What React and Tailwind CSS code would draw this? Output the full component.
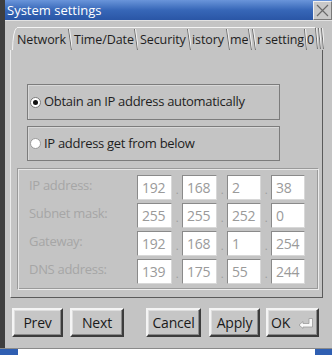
import React from 'react';

// Separador inclinado entre pestañas
function Sep({ w = 4 }) {
  return (
    <svg width={w} height="23" className="shrink-0">
      <line x1="0.5" y1="1" x2={w - 0.5} y2="22" stroke="#6e6e6e" strokeWidth="1" />
      <line x1="1.5" y1="1" x2={w + 0.5} y2="22" stroke="#f2f2f2" strokeWidth="1" />
    </svg>
  );
}

const tabs = [
  { label: 'Network', w: 'w-[51px]', pl: 'pl-0' },
  { label: 'Time/Date', w: 'w-[62px]', pl: 'pl-[2px]' },
  { label: 'Security', w: 'w-[49px]', pl: 'pl-[2px]' },
  { label: 'istory', w: 'w-[35px]', pl: 'pl-[1px]' },
  { label: 'me', w: 'w-[18px]', pl: 'pl-0' },
];

const rows = [
  { label: 'IP address:', v: ['192', '168', '2', '38'] },
  { label: 'Subnet mask:', v: ['255', '255', '252', '0'] },
  { label: 'Gateway:', v: ['192', '168', '1', '254'] },
  { label: 'DNS address:', v: ['139', '175', '55', '244'] },
];

function Field({ value, w }) {
  return (
    <div className={`${w} h-[25px] bg-white border border-t-[#8a8a8a] border-l-[#8a8a8a] border-b-[#d8d8d8] border-r-[#d8d8d8] flex items-center pl-[4px] text-[14px] text-[#9a9a9a]`}>
      {value}
    </div>
  );
}

function Dot() {
  return <div className="w-[10px] h-[25px] flex items-end justify-center pb-[5px] text-[11px] leading-none text-[#999]">.</div>;
}

function Btn({ children, w }) {
  return (
    <button className={`${w} h-[29px] shrink-0 border-2 border-t-[#f4f4f4] border-l-[#f4f4f4] border-b-[#3c3c3c] border-r-[#3c3c3c] bg-[#c6c6c6] shadow-[inset_-1px_-1px_0_#8a8a8a,inset_1px_1px_0_#dedede] flex items-center justify-center text-[14px] tracking-[-0.2px] text-[#1a1a1a]`}>
      {children}
    </button>
  );
}

export default function App() {
  return (
    <div className="w-[332px] h-[355px] overflow-hidden bg-[#c4c4c4] flex flex-col font-['Open_Sans',sans-serif] tracking-[-0.3px] text-[#1e1e1e]">
      <div className="flex flex-1 min-h-0">
        <div className="w-[5px] bg-[#3e3e3e] shrink-0" />
        <div className="flex-1 flex flex-col min-w-0">
          {/* Barra de título */}
          <div className="h-[20px] shrink-0 flex items-center bg-gradient-to-b from-[#6a95da] via-[#3767b8] to-[#2a56a6]">
            <span className="pl-[2px] text-white text-[13px] tracking-normal leading-none">System settings</span>
            <div className="ml-auto w-[19px] h-[19px] bg-[#c8c8c8] border border-t-[#f0f0f0] border-l-[#f0f0f0] border-b-[#7a7a7a] border-r-[#7a7a7a] flex items-center justify-center">
              <svg width="13" height="13" viewBox="0 0 13 13">
                <path d="M1 1 L12 12 M12 1 L1 12" stroke="#6a6a6a" strokeWidth="1.2" />
              </svg>
            </div>
          </div>
          <div className="h-px bg-[#e2e2e2]" />

          {/* Pestañas */}
          <div className="mt-[6px] ml-[7px] h-[23px] flex items-stretch text-[12.5px] tracking-[-0.1px] leading-none overflow-hidden whitespace-nowrap">
            <svg width="5" height="23" className="shrink-0">
              <path d="M0.5 23 Q1 4 4.5 1" stroke="#f4f4f4" fill="none" />
            </svg>
            <div className="flex items-stretch border-t border-[#f4f4f4]">
              {tabs.map((t) => (
                <React.Fragment key={t.label}>
                  <div className={`${t.w} ${t.pl} shrink-0 overflow-hidden flex items-end pb-[4px]`}>{t.label}</div>
                  <Sep />
                </React.Fragment>
              ))}
              <Sep />
              <div className="w-[48px] pl-[1px] shrink-0 overflow-hidden flex items-end pb-[4px]">r setting</div>
              <Sep w={3} />
              <div className="w-[8px] shrink-0 overflow-hidden flex items-end pb-[4px]">0</div>
            </div>
            <Sep w={3} />
            <Sep w={3} />
            <Sep w={3} />
          </div>

          {/* Panel */}
          <div className="ml-[5px] w-[313px] h-[248px] shrink-0 border-l border-l-[#ececec] border-r border-r-[#5a5a5a] border-b border-b-[#5a5a5a] flex flex-col">
            <div className="ml-[16px] mt-[34px] w-[253px] h-[36px] border border-[#7c7c7c] shadow-[inset_1px_1px_0_#d8d8d8] flex items-center pl-[2px]">
              <span className="w-[11px] h-[11px] rounded-full bg-white border border-[#7a7a7a] flex items-center justify-center">
                <span className="w-[5px] h-[5px] rounded-full bg-[#111]" />
              </span>
              <span className="ml-[3px] text-[13px]">Obtain an IP address automatically</span>
            </div>
            <div className="ml-[16px] mt-[6px] w-[253px] h-[35px] border border-[#7c7c7c] shadow-[inset_1px_1px_0_#d8d8d8] flex items-center pl-[2px]">
              <span className="w-[11px] h-[11px] rounded-full bg-white border border-[#9a9a9a]" />
              <span className="ml-[3px] text-[13px]">IP address get from below</span>
            </div>

            {/* Grupo de direcciones */}
            <div className="ml-[6px] mt-[7px] w-[302px] h-[122px] border border-t-[#9a9a9a] border-l-[#9a9a9a] border-b-[#ececec] border-r-[#ececec] shadow-[inset_1px_1px_0_#e6e6e6,inset_-1px_-1px_0_#9a9a9a] flex flex-col gap-[3px] pt-[6px]">
              {rows.map((r) => (
                <div key={r.label} className="flex items-center">
                  <div className="w-[119px] pl-[11px] pb-[4px] text-[13px] text-[#a6a6a6]">{r.label}</div>
                  <Field value={r.v[0]} w="w-[35px]" />
                  <Dot />
                  <Field value={r.v[1]} w="w-[35px]" />
                  <Dot />
                  <Field value={r.v[2]} w="w-[34px]" />
                  <Dot />
                  <Field value={r.v[3]} w="w-[34px]" />
                </div>
              ))}
            </div>
          </div>

          {/* Botones */}
          <div className="mt-[10px] ml-[7px] flex">
            <Btn w="w-[51px]">Prev</Btn>
            <div className="w-[7px]" />
            <Btn w="w-[54px]">Next</Btn>
            <div className="w-[22px]" />
            <Btn w="w-[55px]">Cancel</Btn>
            <div className="w-[8px]" />
            <Btn w="w-[51px]">Apply</Btn>
            <div className="w-[6px]" />
            <Btn w="w-[53px]">
              <span className="mr-[8px]">OK</span>
              <svg width="16" height="12" viewBox="0 0 16 12">
                <path d="M1 8 L5 4.5 L5 6.5 L11 6.5 L11 1.5 L14.5 1.5 L14.5 10 L5 10 L5 11.5 Z" fill="#f8f8f8" stroke="#9a9a9a" strokeWidth="0.8" />
              </svg>
            </Btn>
          </div>
        </div>
      </div>
      <div className="h-px bg-[#8a8a8a]" />
      <div className="h-[6px] shrink-0 flex bg-white">
        <div className="w-[18px] bg-[#2f5fb2]" />
        <div className="ml-auto w-[17px] bg-[#2f5fb2]" />
      </div>
    </div>
  );
}
